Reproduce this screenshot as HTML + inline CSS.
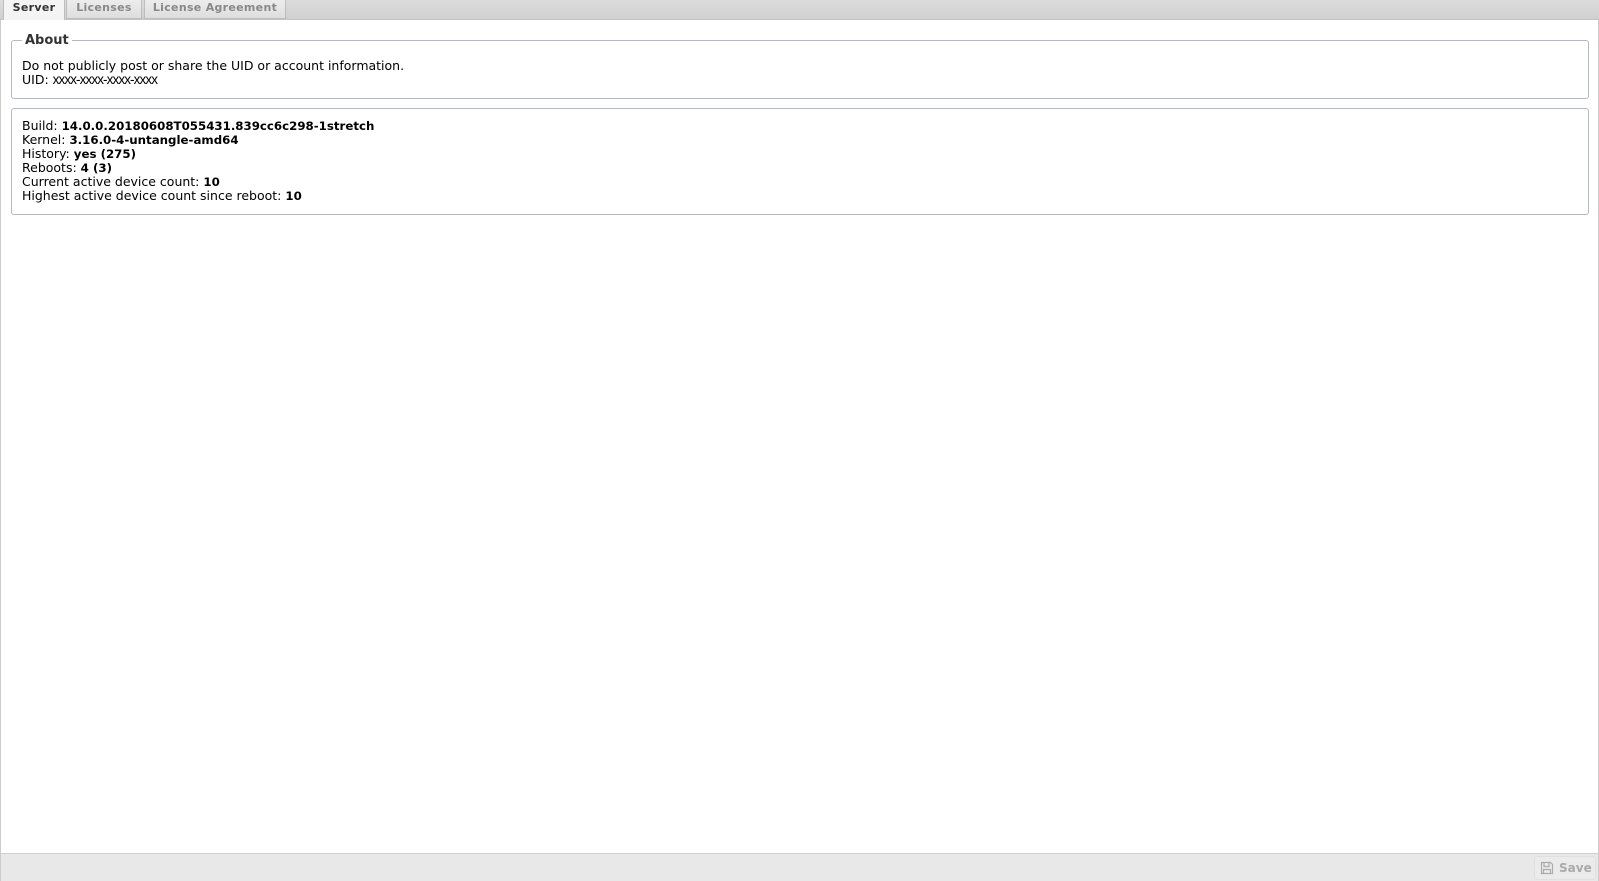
<!DOCTYPE html>
<html><head><style>
body{margin:0;width:1599px;height:881px;background:#fff;font-family:"DejaVu Sans",sans-serif;font-size:12.5px;color:#000;position:relative;overflow:hidden}
b{font-size:11.8px}
.tabbar{position:absolute;left:0;top:0;width:1599px;height:19px;background:linear-gradient(#dcdcdc,#d0d0d0);border-bottom:1px solid #c4c4c4}
.tab{position:absolute;top:0;height:18px;line-height:15px;font-size:11px;font-weight:bold;color:#888;background:linear-gradient(#ececec,#dedede);border:1px solid #bdbdbd;border-top:none;text-align:center;letter-spacing:.3px}
.tab.a{background:#f4f4f4;color:#333;height:20px;border-bottom:none}
.frame{position:absolute;left:0;top:20px;width:1597px;height:833px;border-left:1px solid #ccc;border-right:1px solid #ccc}
.box{position:absolute;left:11px;width:1576px;border:1px solid #b5b8c8;border-radius:3px}
.lg{position:absolute;left:10px;top:-8px;background:#fff;padding:0 3px;font-weight:bold;font-size:13px;color:#333}
.t{position:absolute;left:10px;line-height:14px}
.footer{position:absolute;left:0;top:853px;width:1597px;height:27px;background:#e8e8e8;border-top:1px solid #d0d0d0;border-left:1px solid #ccc;border-right:1px solid #ccc}
.save{position:absolute;right:2px;top:2px;width:60px;height:22px;border:1px solid #e0e0e0;border-radius:3px;background:#ebebeb;color:#aaa;font-weight:bold;font-size:12px;line-height:22px}
</style></head><body>
<div class="tabbar">
<div class="tab a" style="left:3px;width:60px">Server</div>
<div class="tab" style="left:66px;width:74px">Licenses</div>
<div class="tab" style="left:144px;width:140px">License Agreement</div>
</div>
<div class="frame"></div>
<div class="box" style="top:40px;height:57px"><div class="lg">About</div>
<div class="t" style="top:18px">Do not publicly post or share the UID or account information.<br>UID: <span style="font-family:'Liberation Sans',sans-serif;font-size:13.5px;letter-spacing:-.9px">xxxx-xxxx-xxxx-xxxx</span></div></div>
<div class="box" style="top:108px;height:105px">
<div class="t" style="top:10px">Build: <b>14.0.0.20180608T055431.839cc6c298-1stretch</b><br>Kernel: <b>3.16.0-4-untangle-amd64</b><br>History: <b>yes (275)</b><br>Reboots: <b>4 (3)</b><br>Current active device count: <b>10</b><br>Highest active device count since reboot: <b>10</b></div></div>
<div class="footer"><div class="save"><svg width="14" height="14" viewBox="0 0 14 14" style="position:absolute;left:5px;top:4px"><path d="M1.5 1.5h9l2 2v9h-11z M4 1.5v4h5v-4 M3.5 12.5v-4h7v4" fill="none" stroke="#aaa" stroke-width="1.2"/></svg><span style="position:absolute;left:24px">Save</span></div></div>
</body></html>
